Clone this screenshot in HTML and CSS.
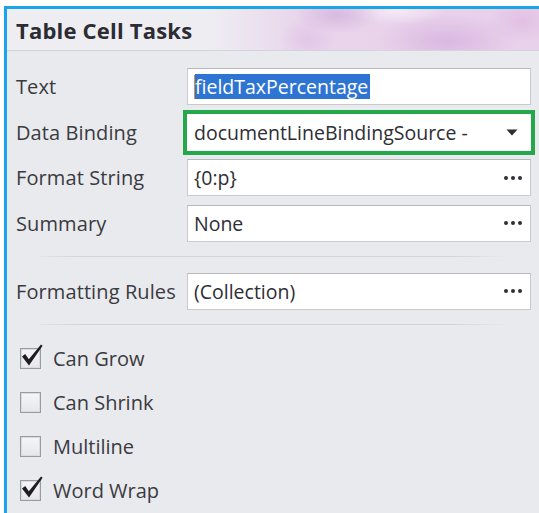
FILE: index.html
```html
<!DOCTYPE html>
<html>
<head>
<meta charset="utf-8">
<link rel="stylesheet" href="styles.css">
</head>
<body>
<div class="panel">
  <div class="header">
    <span class="title">Table Cell Tasks</span>
  </div>
  <div class="content">
    <div class="fields">
      <label class="label">Text</label>
      <div class="field"><span class="caret"></span><span class="selected">fieldTaxPercentage</span></div>

      <label class="label">Data Binding</label>
      <div class="field field-focus">
        <span class="value">documentLineBindingSource -</span>
        <svg class="arrow" width="12" height="7" viewBox="0 0 12 7"><path d="M0.5 0.5h11L6 6.5z" fill="#2f2f36"/></svg>
      </div>

      <label class="label">Format String</label>
      <div class="field"><span class="value">{0:p}</span><span class="dots"><i></i><i></i><i></i></span></div>

      <label class="label">Summary</label>
      <div class="field"><span class="value">None</span><span class="dots"><i></i><i></i><i></i></span></div>
    </div>

    <div class="sep"></div>

    <div class="fields">
      <label class="label">Formatting Rules</label>
      <div class="field"><span class="value">(Collection)</span><span class="dots"><i></i><i></i><i></i></span></div>
    </div>

    <div class="sep"></div>

    <div class="checks">
      <div class="check">
        <span class="box"><svg class="tick" width="24" height="24" viewBox="0 0 24 24"><path d="M2 13.5l3.2-2.6 3.6 5.4L21 1.5l1.6 1.3L9 22.5z" fill="#1e1e22"/></svg></span>
        <span class="check-label">Can Grow</span>
      </div>
      <div class="check">
        <span class="box"></span>
        <span class="check-label">Can Shrink</span>
      </div>
      <div class="check">
        <span class="box"></span>
        <span class="check-label">Multiline</span>
      </div>
      <div class="check">
        <span class="box"><svg class="tick" width="24" height="24" viewBox="0 0 24 24"><path d="M2 13.5l3.2-2.6 3.6 5.4L21 1.5l1.6 1.3L9 22.5z" fill="#1e1e22"/></svg></span>
        <span class="check-label">Word Wrap</span>
      </div>
    </div>
  </div>
</div>
</body>
</html>
```
FILE: styles.css
```css
html, body {
  margin: 0;
  padding: 0;
  background: #ffffff;
  height: 100%;
}

body {
  font-family: "Open Sans", "Noto Sans", sans-serif;
  color: #3a3a40;
  overflow: hidden;
}

.panel {
  margin: 6px 0 0 4px;
  border-top: 3px solid #1aa5e8;
  border-left: 3px solid #1aa5e8;
  background: #e9eaee;
  height: calc(100% - 9px);
}

.header {
  height: 41px;
  border-bottom: 1px solid #d3d3d9;
  display: flex;
  align-items: center;
  padding-left: 9px;
  background:
    radial-gradient(ellipse 60px 26px at 330px 6px, rgba(206, 168, 216, 0.6), rgba(206, 168, 216, 0) 70%),
    radial-gradient(ellipse 100px 40px at 440px 32px, rgba(214, 172, 222, 0.7), rgba(214, 172, 222, 0) 70%),
    radial-gradient(ellipse 70px 20px at 390px 2px, rgba(247, 236, 248, 0.9), rgba(247, 236, 248, 0) 70%),
    radial-gradient(ellipse 40px 30px at 300px 30px, rgba(222, 190, 228, 0.6), rgba(222, 190, 228, 0) 70%),
    radial-gradient(ellipse 50px 30px at 515px 12px, rgba(224, 186, 228, 0.8), rgba(224, 186, 228, 0) 70%),
    linear-gradient(to right, #eeeef2 0%, #eeeef2 38%, #e8d4eb 56%, #e8d1ea 100%);
}

.title {
  font-size: 22px;
  font-weight: 700;
  color: #2c2c34;
  letter-spacing: 0.2px;
}

.content {
  padding: 17px 0 0 9px;
}

.fields {
  display: grid;
  grid-template-columns: 171px 344px;
  row-gap: 8.5px;
  align-items: center;
}

.label {
  font-size: 20px;
  color: #3a3a40;
  white-space: nowrap;
  letter-spacing: 0.1px;
}

.field {
  height: 37px;
  box-sizing: border-box;
  background: #ffffff;
  border: 1px solid #c9c9cf;
  border-top-color: #b8b8be;
  display: flex;
  align-items: center;
  padding: 0 6px 0 6px;
  font-size: 19.5px;
  color: #2e2e36;
  position: relative;
}

.field-focus {
  outline: 4px solid #24a84b;
  outline-offset: 0;
  border-color: #ffffff;
}

.value {
  flex: 1;
  white-space: nowrap;
}

.caret {
  width: 2px;
  height: 24px;
  background: #e08a4a;
  margin-right: -1px;
}

.selected {
  background: #2e74d2;
  color: #ffffff;
  line-height: 25px;
  padding-right: 2px;
}

.arrow {
  margin-right: 6px;
}

.dots {
  display: flex;
  gap: 3px;
  margin-right: 2px;
}

.dots i {
  width: 4px;
  height: 4px;
  border-radius: 50%;
  background: #303038;
}

.sep {
  height: 1px;
  margin: 14px 30px 16px 24px;
  background: linear-gradient(to right, rgba(200, 200, 206, 0.2), #d3d3d9 8%, #d3d3d9 88%, rgba(200, 200, 206, 0));
}

.checks {
  display: flex;
  flex-direction: column;
  gap: 24px;
  padding: 8px 0 0 4px;
}

.check {
  display: flex;
  align-items: center;
  height: 20px;
  gap: 12px;
}

.box {
  width: 19px;
  height: 19px;
  border: 1px solid #9a9aa2;
  background: linear-gradient(#f6f6f8, #e6e6ea);
  box-shadow: inset 0 0 0 1px #dcdce0;
  position: relative;
}

.tick {
  position: absolute;
  left: -1px;
  top: -6px;
}

.check-label {
  font-size: 20px;
  color: #3a3a40;
}
```
